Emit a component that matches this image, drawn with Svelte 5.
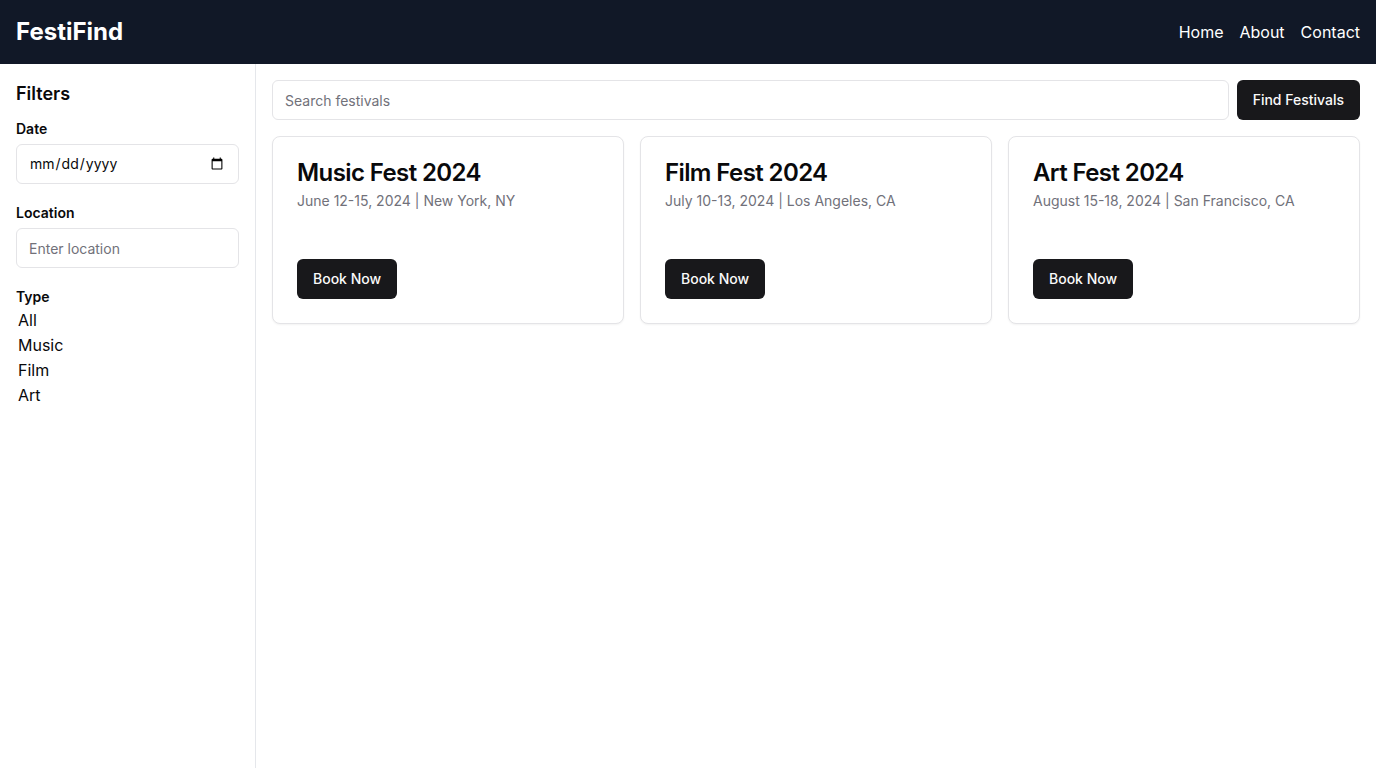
<script>
  const links = ['Home', 'About', 'Contact'];
  const types = ['All', 'Music', 'Film', 'Art'];
  const festivals = [
    { name: 'Music Fest 2024', when: 'June 12-15, 2024', where: 'New York, NY' },
    { name: 'Film Fest 2024', when: 'July 10-13, 2024', where: 'Los Angeles, CA' },
    { name: 'Art Fest 2024', when: 'August 15-18, 2024', where: 'San Francisco, CA' }
  ];
</script>

<div class="page">
  <header>
    <h1>FestiFind</h1>
    <nav>
      {#each links as link}
        <a href="#{link.toLowerCase()}">{link}</a>
      {/each}
    </nav>
  </header>
  <div class="body">
    <aside>
      <h2>Filters</h2>
      <div class="field">
        <label for="date">Date</label>
        <input id="date" class="input" type="date" />
      </div>
      <div class="field">
        <label for="location">Location</label>
        <input id="location" class="input" type="text" placeholder="Enter location" />
      </div>
      <div class="field">
        <label for="type">Type</label>
        <select id="type" size="4">
          {#each types as type}
            <option value={type.toLowerCase()}>{type}</option>
          {/each}
        </select>
      </div>
    </aside>
    <main>
      <form class="search">
        <input class="input" type="search" placeholder="Search festivals" aria-label="Search festivals" />
        <button class="btn" type="button">Find Festivals</button>
      </form>
      <div class="grid">
        {#each festivals as festival}
          <article class="card">
            <h3>{festival.name}</h3>
            <p>{festival.when} | {festival.where}</p>
            <button class="btn" type="button">Book Now</button>
          </article>
        {/each}
      </div>
    </main>
  </div>
</div>

<style>
  :global(body) {
    margin: 0;
    background: #fff;
  }
  .page,
  .page * {
    box-sizing: border-box;
  }
  .page {
    display: flex;
    flex-direction: column;
    min-height: 100vh;
    font-family: Inter, sans-serif;
    font-size: 16px;
    line-height: 24px;
    color: #09090b;
  }
  h1,
  h2,
  h3,
  p {
    margin: 0;
  }
  header {
    display: flex;
    align-items: center;
    justify-content: space-between;
    padding: 16px;
    background: #111827;
    color: #fff;
  }
  h1 {
    font-size: 24px;
    line-height: 32px;
    font-weight: 700;
  }
  nav {
    display: flex;
    gap: 16px;
  }
  nav a {
    color: inherit;
    text-decoration: none;
  }
  .body {
    display: flex;
    flex: 1;
  }
  aside {
    flex: none;
    width: 256px;
    padding: 16px;
    border-right: 1px solid #e5e7eb;
  }
  h2 {
    margin-bottom: 8px;
    font-size: 18px;
    line-height: 28px;
    font-weight: 600;
  }
  .field {
    margin-bottom: 16px;
  }
  label {
    display: block;
    padding-top: 2px;
    font-size: 14px;
    line-height: 22px;
    font-weight: 600;
  }
  .input {
    display: block;
    width: 100%;
    height: 40px;
    padding: 8px 12px;
    border: 1px solid #e4e4e7;
    border-radius: 6px;
    background: #fff;
    color: inherit;
    font-family: inherit;
    font-size: 14px;
    line-height: 20px;
    appearance: none;
  }
  .field .input {
    margin-top: 4px;
  }
  .input::placeholder {
    color: #71717a;
    opacity: 1;
  }
  select {
    display: block;
    width: 100%;
    padding: 0;
    border: 0;
    background: transparent;
    color: inherit;
    font-family: inherit;
    font-size: 16px;
    line-height: 24px;
    overflow: hidden;
  }
  option {
    min-height: 25px;
    padding: 2px;
  }
  main {
    flex: 1;
    min-width: 0;
    padding: 16px;
  }
  .search {
    display: flex;
    gap: 8px;
    margin-bottom: 16px;
  }
  .search .input {
    flex: 1;
    min-width: 0;
  }
  .btn {
    flex: none;
    height: 40px;
    padding: 8px 16px;
    border: 0;
    border-radius: 6px;
    background: #18181b;
    color: #fafafa;
    font-family: inherit;
    font-size: 14px;
    line-height: 20px;
    font-weight: 500;
    cursor: pointer;
  }
  .grid {
    display: grid;
    grid-template-columns: repeat(3, 1fr);
    gap: 16px;
  }
  .card {
    padding: 24px;
    border: 1px solid #e4e4e7;
    border-radius: 8px;
    background: #fff;
    box-shadow: 0 1px 2px rgba(0, 0, 0, 0.05);
  }
  h3 {
    margin-bottom: 6px;
    font-size: 24px;
    line-height: 24px;
    font-weight: 600;
    letter-spacing: -0.025em;
  }
  p {
    margin-bottom: 48px;
    color: #71717a;
    font-size: 14px;
    line-height: 20px;
  }
</style>
